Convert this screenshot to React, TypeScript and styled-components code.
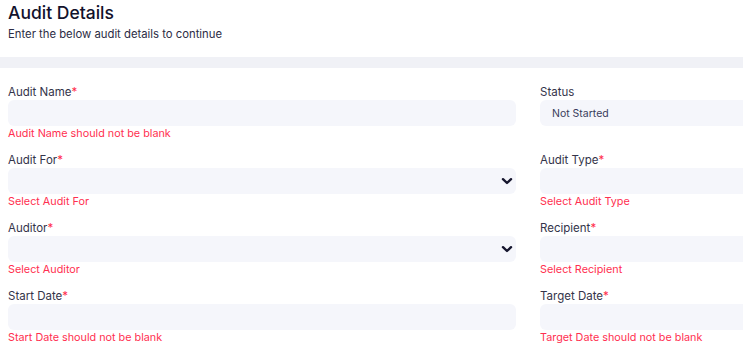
import styled, { createGlobalStyle } from "styled-components";

const GlobalStyle = createGlobalStyle`
  html, body {
    margin: 0;
    padding: 0;
    background: #ffffff;
    overflow: hidden;
  }
  body {
    font-family: Inter, "Noto Sans", sans-serif;
    color: #1b1b33;
  }
`;

const Page = styled.div`
  width: 100%;
  overflow: hidden;
`;

const Header = styled.header`
  padding: 0 8px;
  height: 57px;
  box-sizing: border-box;
`;

const Title = styled.h1`
  margin: 0;
  font-size: 17.5px;
  line-height: 25px;
  font-weight: 500;
  color: #12122c;
`;

const Subtitle = styled.p`
  margin: 2px 0 0;
  font-size: 11.3px;
  line-height: 15px;
  color: #2c2c44;
`;

const Band = styled.div`
  height: 11px;
  background: #f0f1f6;
`;

const Form = styled.form`
  display: grid;
  grid-template-columns: 508px 508px;
  column-gap: 24px;
  row-gap: 10px;
  padding: 16px 8px 0;
  width: max-content;
`;

const Field = styled.div`
  display: flex;
  flex-direction: column;
`;

const Label = styled.label`
  font-size: 11.5px;
  line-height: 16px;
  color: #34344a;
`;

const Star = styled.span`
  color: #ff2d4b;
`;

const Box = styled.div`
  height: 26px;
  border-radius: 6px;
  background: #f5f6fb;
  display: flex;
  align-items: center;
  justify-content: space-between;
  padding: 0 2px 0 12px;
  box-sizing: border-box;
  font-size: 10.5px;
  color: #3a3d5c;
`;

const Error = styled.div`
  font-size: 10.8px;
  line-height: 16px;
  height: 16px;
  color: #ff2f50;
`;

const Chevron = () => (
  <svg width="14" height="14" viewBox="0 0 14 14" fill="none">
    <polyline
      points="3,5.2 7,9 11,5.2"
      stroke="#16162e"
      strokeWidth="2.4"
      strokeLinecap="round"
      strokeLinejoin="round"
    />
  </svg>
);

type FieldDef = {
  label: string;
  required?: boolean;
  value?: string;
  select?: boolean;
  error?: string;
};

const fields: FieldDef[] = [
  { label: "Audit Name", required: true, error: "Audit Name should not be blank" },
  { label: "Status", value: "Not Started" },
  { label: "Audit For", required: true, select: true, error: "Select Audit For" },
  { label: "Audit Type", required: true, select: true, error: "Select Audit Type" },
  { label: "Auditor", required: true, select: true, error: "Select Auditor" },
  { label: "Recipient", required: true, select: true, error: "Select Recipient" },
  { label: "Start Date", required: true, error: "Start Date should not be blank" },
  { label: "Target Date", required: true, error: "Target Date should not be blank" },
];

export default function App() {
  return (
    <Page>
      <GlobalStyle />
      <Header>
        <Title>Audit Details</Title>
        <Subtitle>Enter the below audit details to continue</Subtitle>
      </Header>
      <Band />
      <Form>
        {fields.map((f) => (
          <Field key={f.label}>
            <Label>
              {f.label}
              {f.required && <Star>*</Star>}
            </Label>
            <Box>
              <span>{f.value}</span>
              {f.select && <Chevron />}
            </Box>
            <Error>{f.error}</Error>
          </Field>
        ))}
      </Form>
    </Page>
  );
}
